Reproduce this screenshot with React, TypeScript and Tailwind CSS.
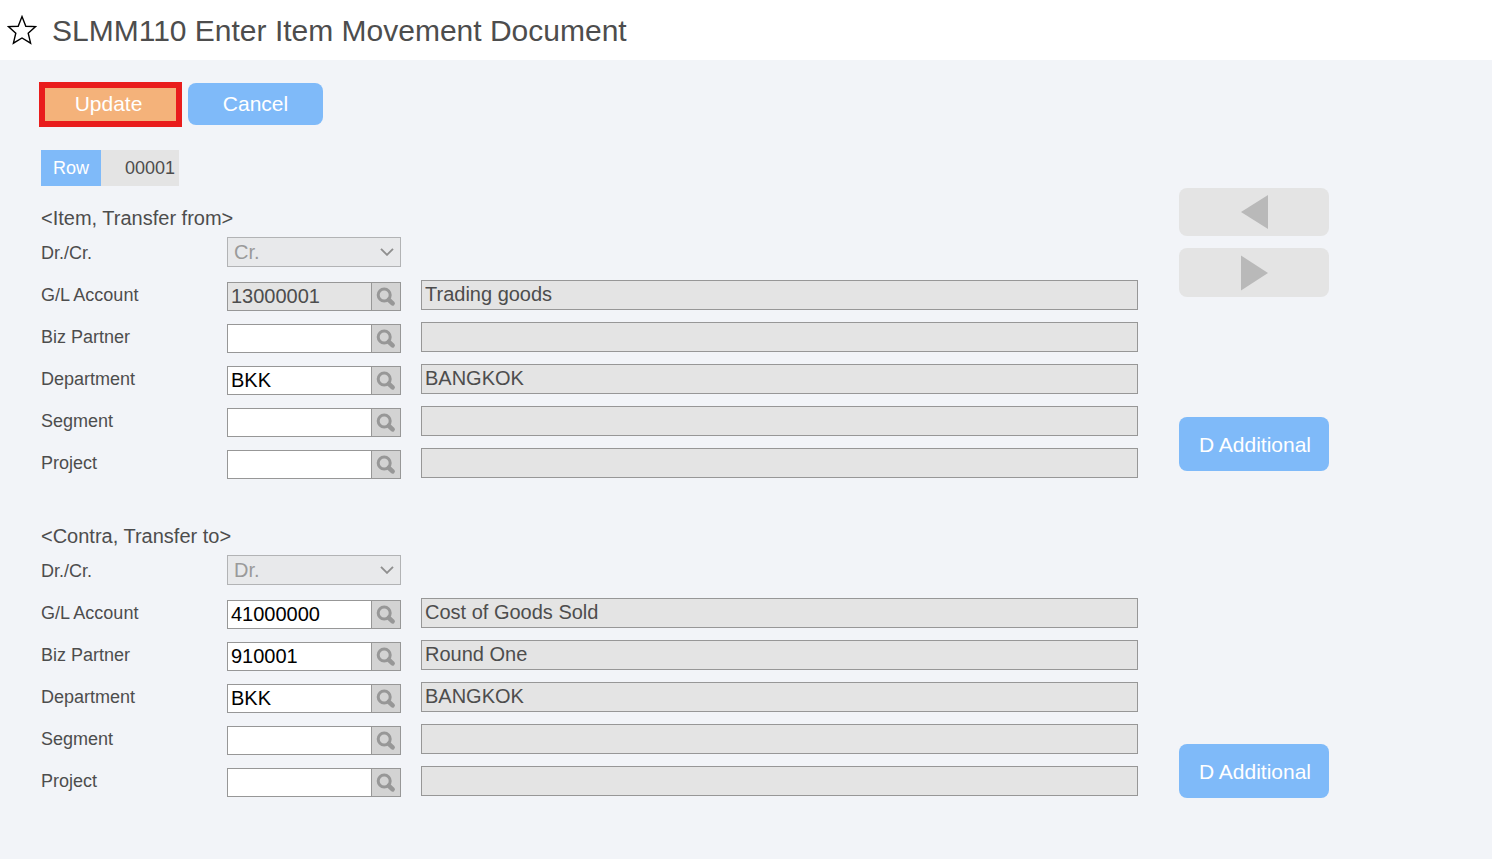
import React, { useId } from "react";

type Field = {
  label: string;
  code: string;
  description: string;
  readOnly?: boolean;
};

type Section = {
  title: string;
  side: string;
  fields: Field[];
};

const itemSection: Section = {
  title: "<Item, Transfer from>",
  side: "Cr.",
  fields: [
    { label: "G/L Account", code: "13000001", description: "Trading goods", readOnly: true },
    { label: "Biz Partner", code: "", description: "" },
    { label: "Department", code: "BKK", description: "BANGKOK" },
    { label: "Segment", code: "", description: "" },
    { label: "Project", code: "", description: "" },
  ],
};

const contraSection: Section = {
  title: "<Contra, Transfer to>",
  side: "Dr.",
  fields: [
    { label: "G/L Account", code: "41000000", description: "Cost of Goods Sold" },
    { label: "Biz Partner", code: "910001", description: "Round One" },
    { label: "Department", code: "BKK", description: "BANGKOK" },
    { label: "Segment", code: "", description: "" },
    { label: "Project", code: "", description: "" },
  ],
};

function StarIcon() {
  return (
    <svg viewBox="0 0 30 30" className="size-[30px]" fill="none" stroke="#000" strokeWidth="1.4" aria-hidden="true">
      <path d="M15 1.6 L18.8 11.2 L28.6 11.6 L21.2 18.2 L23.6 28.2 L15 23 L6.4 28.2 L8.8 18.2 L1.4 11.6 L11.2 11.2 Z" />
    </svg>
  );
}

function SearchIcon() {
  return (
    <svg viewBox="0 0 20 20" className="size-5" fill="none" stroke="#979797" aria-hidden="true">
      <circle cx="8.2" cy="8" r="6" strokeWidth="3" />
      <path d="M12.8 12.8 L16.6 16.4" strokeWidth="4.6" strokeLinecap="round" />
    </svg>
  );
}

function AdditionalButton() {
  return (
    <button type="button" className="h-[54px] w-full rounded-lg bg-[#7fbaf9] pt-[2px] pl-[2px] text-[21px] text-white">
      D Additional
    </button>
  );
}

function FieldRow({ field }: { field: Field }) {
  const id = useId();
  return (
    <div className="flex h-[42px] items-start">
      <label htmlFor={id} className="w-[186px] shrink-0 text-lg leading-[42px]">
        {field.label}
      </label>
      <div className="mt-2 flex h-[29px] w-[174px] shrink-0 border border-[#979797]">
        <input
          id={id}
          defaultValue={field.code}
          readOnly={field.readOnly}
          className="min-w-0 flex-1 bg-white px-[3px] pb-[2px] text-xl text-black outline-none read-only:bg-[#e4e4e4] read-only:text-[#4d4d4d]"
        />
        <button
          type="button"
          aria-label={`Search ${field.label}`}
          className="flex w-[29px] items-center justify-center border-l border-[#979797] bg-[#d3d3d3]"
        >
          <SearchIcon />
        </button>
      </div>
      <input
        readOnly
        aria-label={`${field.label} name`}
        defaultValue={field.description}
        className="mt-[6px] ml-5 h-[30px] min-w-0 flex-1 border border-[#979797] bg-[#e4e4e4] px-[3px] pb-[2px] text-xl outline-none"
      />
    </div>
  );
}

function SectionForm({ section }: { section: Section }) {
  const id = useId();
  return (
    <section className="min-w-0 flex-1">
      <h2 className="pt-[18px] text-xl leading-7">{section.title}</h2>
      <div className="flex h-[42px] items-start">
        <label htmlFor={id} className="w-[186px] shrink-0 text-lg leading-[42px]">
          Dr./Cr.
        </label>
        <div className="relative mt-[5px] w-[174px]">
          <select
            id={id}
            disabled
            defaultValue={section.side}
            className="block h-[30px] w-full appearance-none border border-[#b2b3b5] bg-[#e8e9eb] px-[6px] text-xl leading-7 text-[#9a9a9a] opacity-100"
          >
            <option>Dr.</option>
            <option>Cr.</option>
          </select>
          <svg
            viewBox="0 0 14 8"
            className="pointer-events-none absolute top-[11px] right-[7px] h-2 w-3.5"
            fill="none"
            stroke="#8f8f8f"
            strokeWidth="1.9"
            aria-hidden="true"
          >
            <path d="M1 0.8 L7 6.8 L13 0.8" />
          </svg>
        </div>
      </div>
      {section.fields.map((field) => (
        <FieldRow key={field.label} field={field} />
      ))}
    </section>
  );
}

export default function App() {
  return (
    <div className="min-h-screen bg-[#f2f4f8] font-['Liberation_Sans',Arial,sans-serif] text-[#4d4d4d]">
      <header className="flex h-[60px] items-center gap-[15px] bg-white px-[7px]">
        <button type="button" aria-label="Add to favourites">
          <StarIcon />
        </button>
        <h1 className="pt-[2px] text-3xl leading-10">SLMM110 Enter Item Movement Document</h1>
      </header>

      <main className="pt-[22px] pr-[163px] pb-10 pl-[41px]">
        <div className="-ml-[2px] flex h-[45px] items-start gap-[6px]">
          <button
            type="button"
            className="h-[45px] w-[143px] border-[6px] border-[#e91c1c] bg-[#f4b27a] pr-1 pb-[2px] text-[21px] leading-8 text-white"
          >
            Update
          </button>
          <button type="button" className="mt-px h-[42px] w-[135px] rounded-lg bg-[#7fbaf9] text-[21px] text-white">
            Cancel
          </button>
        </div>

        <div className="mt-[23px] flex h-9 text-lg leading-9">
          <label htmlFor="row-number" className="w-[60px] bg-[#7fbaf9] text-center text-white">
            Row
          </label>
          <input
            id="row-number"
            readOnly
            defaultValue="00001"
            className="w-[78px] bg-[#e4e4e4] pr-1 text-right outline-none"
          />
        </div>

        <div className="flex gap-[41px]">
          <SectionForm section={itemSection} />
          <aside className="w-[150px] shrink-0 pt-[2px]">
            <button
              type="button"
              aria-label="Previous row"
              className="flex h-12 w-full items-center justify-center rounded-lg bg-[#e4e4e4]"
            >
              <svg viewBox="0 0 28 36" className="h-9 w-7" fill="#b9b9b9" aria-hidden="true">
                <path d="M28 1 V35 L1 18 Z" />
              </svg>
            </button>
            <button
              type="button"
              aria-label="Next row"
              className="mt-3 mb-[120px] flex h-[49px] w-full items-center justify-center rounded-lg bg-[#e4e4e4]"
            >
              <svg viewBox="0 0 28 36" className="h-9 w-7" fill="#b9b9b9" aria-hidden="true">
                <path d="M1 0.5 V35.5 L28 18 Z" />
              </svg>
            </button>
            <AdditionalButton />
          </aside>
        </div>

        <div className="mt-5 flex gap-[41px]">
          <SectionForm section={contraSection} />
          <aside className="w-[150px] shrink-0 pt-60">
            <AdditionalButton />
          </aside>
        </div>
      </main>
    </div>
  );
}
